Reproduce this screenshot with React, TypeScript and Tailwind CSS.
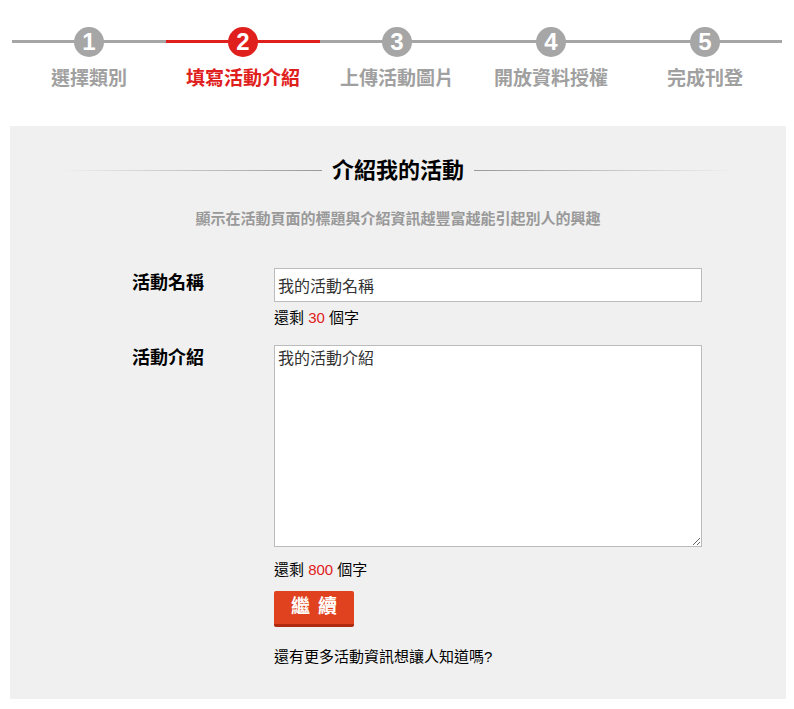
const steps = ['選擇類別', '填寫活動介紹', '上傳活動圖片', '開放資料授權', '完成刊登'];
const font = { fontFamily: '"Liberation Sans", "Noto Sans CJK TC", sans-serif' };

export default function App() {
  return (
    <div className="w-[794px] h-[709px] bg-white" style={font}>
      <div className="flex px-[12px] pt-[27px]">
        {steps.map((s, i) => {
          const active = i === 1;
          return (
            <div key={s} className="relative flex w-[154px] flex-col items-center">
              <div className={`absolute left-0 right-0 top-[13px] h-[3px] ${active ? 'bg-[#e0201c]' : 'bg-[#a6a6a6]'}`} />
              <div
                className={`relative z-10 flex h-[30px] w-[30px] items-center justify-center rounded-full text-[24px] font-bold leading-none text-white ${active ? 'bg-[#e0201c]' : 'bg-[#a6a6a6]'}`}
              >
                {i + 1}
              </div>
              <div className={`mt-[8px] text-[19px] font-bold ${active ? 'text-[#e0201c]' : 'text-[#a0a0a0]'}`}>{s}</div>
            </div>
          );
        })}
      </div>
      <div className="ml-[10px] mt-[32px] h-[573px] w-[776px] bg-[#f0f0f0] pt-[28px]">
        <div className="flex items-center gap-[10px] px-[50px]">
          <div className="h-px flex-1 bg-gradient-to-r from-transparent to-[#999]" />
          <h2 className="text-[22px] font-bold text-black">介紹我的活動</h2>
          <div className="h-px flex-1 bg-gradient-to-l from-transparent to-[#999]" />
        </div>
        <p className="mt-[21px] text-center text-[15px] font-bold text-[#999]">顯示在活動頁面的標題與介紹資訊越豐富越能引起別人的興趣</p>
        <div className="mt-[38px] flex pl-[122px]">
          <div className="w-[142px] pt-[2px] text-[18px] font-bold">活動名稱</div>
          <div>
            <input className="h-[34px] w-[428px] border border-[#bbb] bg-white px-[3px] text-[16px] text-[#333] outline-none" defaultValue="我的活動名稱" />
            <div className="mt-[5px] text-[15px]">還剩 <span className="text-[#e0201c]">30</span> 個字</div>
          </div>
        </div>
        <div className="mt-[15px] flex pl-[122px]">
          <div className="w-[142px] text-[18px] font-bold">活動介紹</div>
          <div>
            <textarea className="block h-[202px] w-[428px] border border-[#bbb] bg-white px-[3px] pt-[1px] text-[16px] text-[#333] outline-none" defaultValue="我的活動介紹" />
            <div className="mt-[12px] text-[15px]">還剩 <span className="text-[#e0201c]">800</span> 個字</div>
            <button className="mt-[10px] h-[36px] w-[80px] rounded-[2px] border-b-[3px] border-[#b02a10] bg-[#e0421f] text-[19px] font-bold tracking-[8px] text-white indent-[8px]">繼續</button>
            <div className="mt-[19px] text-[15px]">還有更多活動資訊想讓人知道嗎?</div>
          </div>
        </div>
      </div>
    </div>
  );
}
